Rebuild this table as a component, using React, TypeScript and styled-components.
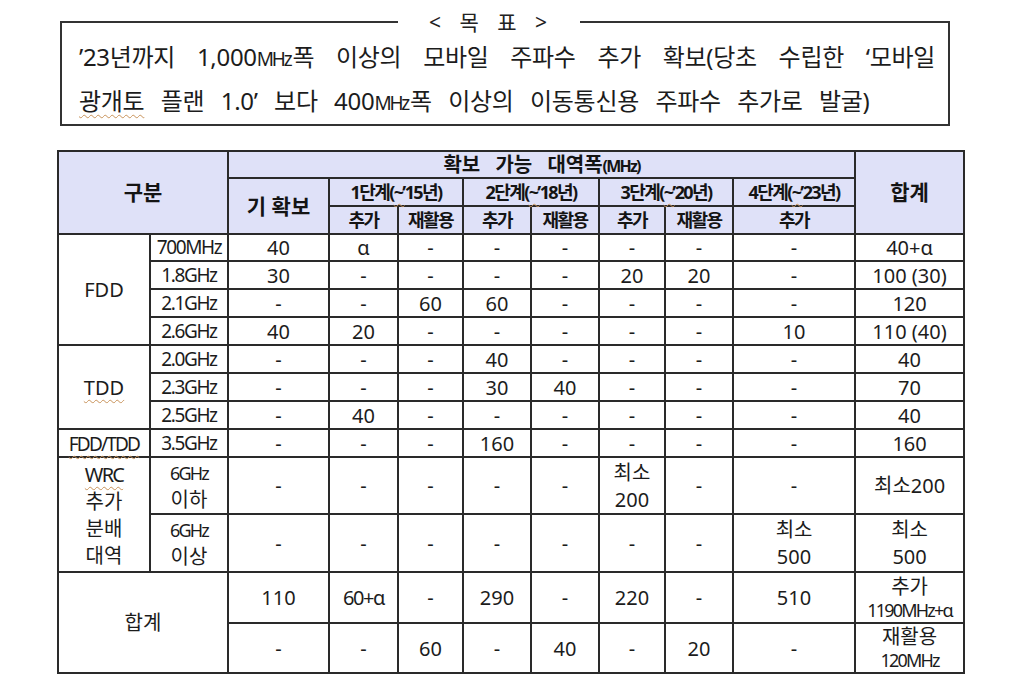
import React from "react";
import styled, { createGlobalStyle } from "styled-components";

const Global = createGlobalStyle`
  html, body { margin: 0; padding: 0; background: #ffffff; }
  body { font-family: "Noto Sans", "Noto Sans CJK KR", sans-serif; color: #1c1c1c; }
`;

const Page = styled.div`
  width: 1024px;
  height: 681px;
  padding: 9px 0 0 57px;
  box-sizing: border-box;
  overflow: hidden;
`;

const GoalBox = styled.fieldset`
  margin: 0 0 0 3px;
  width: 890px;
  box-sizing: border-box;
  border: 2px solid #333;
  padding: 0 13px 1px 17px;
`;

const GoalTitle = styled.legend`
  margin-left: 319px;
  padding: 0 33px 0 31px;
  font-size: 21px;
  line-height: 26px;
  word-spacing: 13px;
  color: #222;
`;

const GoalLine = styled.div<{ $justify?: boolean }>`
  font-size: 24px;
  line-height: 44px;
  white-space: nowrap;
  text-align: ${(p) => (p.$justify ? "justify" : "left")};
  text-align-last: ${(p) => (p.$justify ? "justify" : "left")};
  text-justify: inter-word;
  word-spacing: ${(p) => (p.$justify ? "0" : "10.5px")};
  letter-spacing: -0.3px;
`;

const Unit = styled.span`
  font-size: 19px;
  line-height: 1;
  letter-spacing: -2.2px;
  margin-right: 2px;
`;

const Wavy = styled.span`
  text-decoration: underline wavy #c8935a;
  text-decoration-thickness: 1px;
  text-underline-offset: 4px;
`;

const Grid = styled.table`
  margin-top: 24px;
  width: 906px;
  table-layout: fixed;
  border-collapse: collapse;
  border: 2px solid #2a2a2a;
`;

const Row = styled.tr<{ $h: number }>`
  height: ${(p) => p.$h}px;
`;

const HeadCell = styled.th<{ $size?: number; $tight?: boolean }>`
  background: #dfe1f8;
  border: 2px solid #2a2a2a;
  padding: 0;
  font-weight: 700;
  font-size: ${(p) => p.$size ?? 20}px;
  line-height: 23px;
  letter-spacing: ${(p) => (p.$tight ? "-1.6px" : "0")};
  color: #141414;
  text-align: center;
  vertical-align: middle;
  white-space: nowrap;
`;

const SpacedHead = styled.span`
  word-spacing: 10px;
`;

const Cell = styled.td<{ $lh?: number; $tight?: boolean; $size?: number }>`
  border: 2px solid #2a2a2a;
  padding: 0;
  font-size: ${(p) => p.$size ?? 20}px;
  line-height: ${(p) => p.$lh ?? 23}px;
  letter-spacing: ${(p) => (p.$tight ? "-1.4px" : "0")};
  color: #1c1c1c;
  text-align: center;
  vertical-align: middle;
  white-space: nowrap;
`;

const Cond = styled.span<{ $size?: number }>`
  font-size: ${(p) => p.$size ?? 18}px;
  line-height: 1;
  letter-spacing: -1.8px;
`;

const Line = styled.div``;

const colWidths = [92, 78, 101, 69, 65, 68, 68, 66, 68, 122, 109];

type Val = React.ReactNode;

const freqRows: { group?: React.ReactNode; span?: number; freq: string; vals: Val[] }[] = [
  { group: "FDD", span: 4, freq: "700MHz", vals: ["40", "α", "-", "-", "-", "-", "-", "-", "40+α"] },
  { freq: "1.8GHz", vals: ["30", "-", "-", "-", "-", "20", "20", "-", "100 (30)"] },
  { freq: "2.1GHz", vals: ["-", "-", "60", "60", "-", "-", "-", "-", "120"] },
  { freq: "2.6GHz", vals: ["40", "20", "-", "-", "-", "-", "-", "10", "110 (40)"] },
  { group: <Wavy>TDD</Wavy>, span: 3, freq: "2.0GHz", vals: ["-", "-", "-", "40", "-", "-", "-", "-", "40"] },
  { freq: "2.3GHz", vals: ["-", "-", "-", "30", "40", "-", "-", "-", "70"] },
  { freq: "2.5GHz", vals: ["-", "40", "-", "-", "-", "-", "-", "-", "40"] },
  {
    group: (
      <Cond $size={19}>
        <Wavy>FDD/TDD</Wavy>
      </Cond>
    ),
    span: 1,
    freq: "3.5GHz",
    vals: ["-", "-", "-", "160", "-", "-", "-", "-", "160"],
  },
];

const Two = ({ a, b }: { a: React.ReactNode; b: React.ReactNode }) => (
  <>
    <Line>{a}</Line>
    <Line>{b}</Line>
  </>
);

export default function App() {
  return (
    <>
      <Global />
      <Page>
        <GoalBox>
          <GoalTitle>&lt; 목 표 &gt;</GoalTitle>
          <GoalLine $justify>
            ’23년까지 1,000<Unit>MHz</Unit>폭 이상의 모바일 주파수 추가 확보(당초 수립한 ‘모바일
          </GoalLine>
          <GoalLine>
            <Wavy>광개토</Wavy> 플랜 1.0’ 보다 400<Unit>MHz</Unit>폭 이상의 이동통신용 주파수 추가로 발굴)
          </GoalLine>
        </GoalBox>

        <Grid>
          <colgroup>
            {colWidths.map((w, i) => (
              <col key={i} style={{ width: w }} />
            ))}
          </colgroup>
          <thead>
            <Row $h={27}>
              <HeadCell colSpan={2} rowSpan={3} $size={21}>
                구분
              </HeadCell>
              <HeadCell colSpan={8} $size={20}>
                <SpacedHead>확보 가능 대역폭</SpacedHead>
                <Cond $size={16}>(MHz)</Cond>
              </HeadCell>
              <HeadCell rowSpan={3} $size={21}>
                합계
              </HeadCell>
            </Row>
            <Row $h={28}>
              <HeadCell rowSpan={2} $size={21}>
                기 확보
              </HeadCell>
              <HeadCell colSpan={2} $size={18} $tight>
                1단계(<Wavy>~’</Wavy>15년)
              </HeadCell>
              <HeadCell colSpan={2} $size={18} $tight>
                2단계(<Wavy>~’</Wavy>18년)
              </HeadCell>
              <HeadCell colSpan={2} $size={18} $tight>
                3단계(<Wavy>~’</Wavy>20년)
              </HeadCell>
              <HeadCell $size={18} $tight>
                4단계(<Wavy>~’</Wavy>23년)
              </HeadCell>
            </Row>
            <Row $h={28}>
              <HeadCell $size={18} $tight>추가</HeadCell>
              <HeadCell $size={18} $tight>재활용</HeadCell>
              <HeadCell $size={18} $tight>추가</HeadCell>
              <HeadCell $size={18} $tight>재활용</HeadCell>
              <HeadCell $size={18} $tight>추가</HeadCell>
              <HeadCell $size={18} $tight>재활용</HeadCell>
              <HeadCell $size={18} $tight>추가</HeadCell>
            </Row>
          </thead>
          <tbody>
            {freqRows.map((r, i) => (
              <Row key={i} $h={i === 0 ? 27 : 28}>
                {r.group !== undefined && <Cell rowSpan={r.span}>{r.group}</Cell>}
                <Cell $tight $size={19}>
                  {r.freq}
                </Cell>
                {r.vals.map((v, j) => (
                  <Cell key={j}>{v}</Cell>
                ))}
              </Row>
            ))}
            <Row $h={57}>
              <Cell rowSpan={2} $lh={27}>
                <Line>
                  <Cond $size={20}>
                    <Wavy>WRC</Wavy>
                  </Cond>
                </Line>
                <Line>추가</Line>
                <Line>분배</Line>
                <Line>대역</Line>
              </Cell>
              <Cell $lh={27}>
                <Two a={<Cond $size={18}>6GHz</Cond>} b="이하" />
              </Cell>
              {["-", "-", "-", "-", "-"].map((v, j) => (
                <Cell key={j}>{v}</Cell>
              ))}
              <Cell $lh={27}>
                <Two a="최소" b="200" />
              </Cell>
              <Cell>-</Cell>
              <Cell>-</Cell>
              <Cell>최소200</Cell>
            </Row>
            <Row $h={58}>
              <Cell $lh={27}>
                <Two a={<Cond $size={18}>6GHz</Cond>} b="이상" />
              </Cell>
              {["-", "-", "-", "-", "-", "-", "-"].map((v, j) => (
                <Cell key={j}>{v}</Cell>
              ))}
              <Cell $lh={27}>
                <Two a="최소" b="500" />
              </Cell>
              <Cell $lh={27}>
                <Two a="최소" b="500" />
              </Cell>
            </Row>
            <Row $h={51}>
              <Cell colSpan={2} rowSpan={2}>
                합계
              </Cell>
              <Cell>110</Cell>
              <Cell $tight>60+α</Cell>
              <Cell>-</Cell>
              <Cell>290</Cell>
              <Cell>-</Cell>
              <Cell>220</Cell>
              <Cell>-</Cell>
              <Cell>510</Cell>
              <Cell $lh={23}>
                <Two a="추가" b={<Cond $size={18}>1190MHz+α</Cond>} />
              </Cell>
            </Row>
            <Row $h={50}>
              <Cell>-</Cell>
              <Cell>-</Cell>
              <Cell>60</Cell>
              <Cell>-</Cell>
              <Cell>40</Cell>
              <Cell>-</Cell>
              <Cell>20</Cell>
              <Cell>-</Cell>
              <Cell $lh={23}>
                <Two a="재활용" b={<Cond $size={18}>120MHz</Cond>} />
              </Cell>
            </Row>
          </tbody>
        </Grid>
      </Page>
    </>
  );
}
